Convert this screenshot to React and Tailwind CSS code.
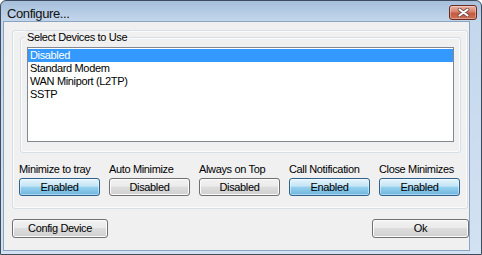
import React from "react";

const F = "font-['Liberation_Sans',Arial,sans-serif]";
const grayBtn =
  "border border-[#707070] rounded-[3px] bg-[linear-gradient(180deg,#f2f2f2_0%,#ebebeb_45%,#dddddd_50%,#cfcfcf_100%)] shadow-[inset_0_0_0_1px_#fcfcfc]";
const blueBtn =
  "border border-[#2c628b] rounded-[3px] bg-[linear-gradient(180deg,#e5f4fc_0%,#c4e5f6_45%,#98d1ef_50%,#6cb5dd_100%)] shadow-[inset_0_0_0_1px_rgba(255,255,255,0.45)]";

const toggles = [
  { label: "Minimize to tray", value: "Enabled" },
  { label: "Auto Minimize", value: "Disabled" },
  { label: "Always on Top", value: "Disabled" },
  { label: "Call Notification", value: "Enabled" },
  { label: "Close Minimizes", value: "Enabled" },
];

const devices = ["Disabled", "Standard Modem", "WAN Miniport (L2TP)", "SSTP"];

export default function App() {
  return (
    <div className={`w-[482px] h-[255px] bg-white ${F} text-black`}>
      <div className="w-[482px] h-[255px] border border-[#3e4c5e] rounded-t-[6px] bg-[linear-gradient(180deg,#a6bfdb_0px,#c4d7ec_21px,#d3e2f2_100%)] flex flex-col">
        {/* title bar */}
        <div className="h-[20px] flex justify-between shrink-0">
          <div className="pl-[6px] pt-[3px] text-[13px] leading-[19px] tracking-[-0.4px] text-[#111]">
            Configure...
          </div>
          <div className="mt-[4px] mr-[4px] w-[28px] h-[15px] rounded-[3px] border border-[#6b2a20] bg-[linear-gradient(180deg,#eab1a3_0%,#d9826d_45%,#c55a40_55%,#cf6d52_100%)] shadow-[inset_0_0_0_1px_rgba(255,255,255,0.35)] flex items-center justify-center">
            <svg width="13" height="9" viewBox="0 0 13 9">
              <path d="M2.5 1.5 L10.5 7.5 M10.5 1.5 L2.5 7.5" stroke="#6e4a44" strokeWidth="3.6" strokeLinecap="round" />
              <path d="M2.5 1.5 L10.5 7.5 M10.5 1.5 L2.5 7.5" stroke="#ffffff" strokeWidth="2.1" strokeLinecap="round" />
            </svg>
          </div>
        </div>
        {/* body */}
        <div className="flex-1 pl-[2px] pr-[11px] pb-[3px]">
          <div className="h-full border border-[#8aa4c2] bg-[#f0f0f0] pl-[8px] pt-[8px] text-[11px] tracking-[-0.35px]">
            {/* panel */}
            <div className="w-[456px] h-[179px] border border-[#d5dfe5] rounded-[3px] shadow-[inset_0_0_0_1px_#fbfbfb]">
              {/* group box */}
              <div className="relative mt-[6px] ml-[7px] w-[441px] h-[116px] border border-[#d5dfe5] rounded-[3px] shadow-[inset_0_0_0_1px_#fbfbfb]">
                <div className="absolute left-[4px] top-[-7px] px-[2px] bg-[#f0f0f0] leading-[13px]">
                  Select Devices to Use
                </div>
                <div className="ml-[6px] mt-[9px] w-[427px] h-[95px] border border-[#828790] bg-white pt-[1px]">
                  {devices.map((d, i) => (
                    <div
                      key={d}
                      className={
                        i === 0
                          ? "h-[13px] leading-[13px] pl-[2px] bg-[#3399ff] text-white"
                          : "h-[13px] leading-[13px] pl-[2px]"
                      }
                    >
                      {d}
                    </div>
                  ))}
                </div>
              </div>
              {/* toggles */}
              <div className="ml-[6px] mt-[10px] flex gap-[9px]">
                {toggles.map((t) => (
                  <div key={t.label} className="w-[81px] flex flex-col">
                    <div className="leading-[13px] whitespace-nowrap">{t.label}</div>
                    <div
                      className={`mt-[2px] h-[18px] leading-[16px] text-center ${
                        t.value === "Enabled" ? blueBtn : grayBtn
                      }`}
                    >
                      {t.value}
                    </div>
                  </div>
                ))}
              </div>
            </div>
            {/* bottom buttons */}
            <div className="mt-[10px] w-[457px] flex justify-between">
              <div className={`w-[96px] h-[19px] leading-[17px] text-center ${grayBtn}`}>Config Device</div>
              <div className={`w-[97px] h-[19px] leading-[17px] text-center ${grayBtn}`}>Ok</div>
            </div>
          </div>
        </div>
      </div>
    </div>
  );
}
